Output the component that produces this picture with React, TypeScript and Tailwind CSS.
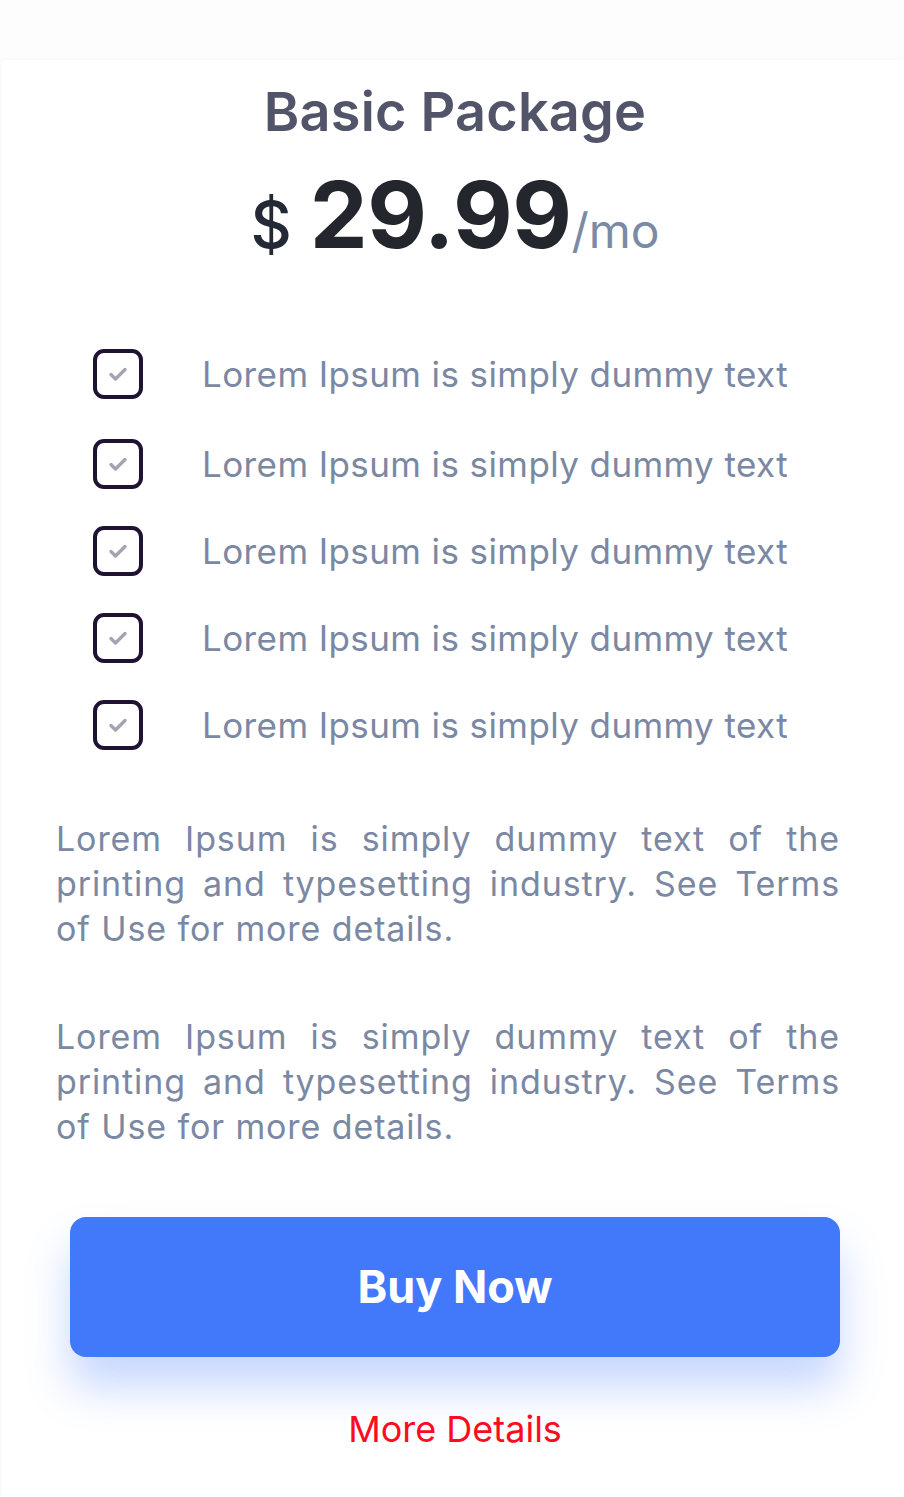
import React from 'react';

const FEATURES = [
  'Lorem Ipsum is simply dummy text',
  'Lorem Ipsum is simply dummy text',
  'Lorem Ipsum is simply dummy text',
  'Lorem Ipsum is simply dummy text',
  'Lorem Ipsum is simply dummy text',
];

const NOTE =
  'Lorem Ipsum is simply dummy text of the printing and typesetting industry. See Terms of Use for more details.';

function CheckBox() {
  return (
    <div className="w-[50px] h-[50px] shrink-0 rounded-[11px] border-[4px] border-[#1f1233] flex items-center justify-center">
      <svg width="24" height="24" viewBox="0 0 24 24" fill="none">
        <path d="M5 12.5l4.5 4.5L19 7.5" stroke="#a8a1b0" strokeWidth="3.4" strokeLinecap="round" strokeLinejoin="round" />
      </svg>
    </div>
  );
}

export default function App() {
  return (
    <div className="min-h-screen bg-[#fdfdfd] pt-[60px] font-['Inter','Noto_Sans',sans-serif]">
      {/* Card */}
      <div className="ml-[2px] bg-white shadow-[0_0_4px_rgba(120,130,170,0.06)] min-h-[1437px] pl-[54px] pr-[64px] pt-[20px]">
        <div className="pl-[14px]">
          <h1 className="text-center text-[54px] leading-[64px] font-semibold text-[#525469] tracking-[0.2px]">
            Basic Package
          </h1>

          <div className="flex items-baseline justify-center mt-[2px] h-[100px]">
            <span className="text-[64px] font-medium text-[#232a35] mr-[18px]">$</span>
            <span className="text-[92px] font-bold text-[#23262d] tracking-[-0.5px]">29.99</span>
            <span className="text-[48px] font-normal text-[#7b8aa6]">/mo</span>
          </div>
        </div>

        {/* Features */}
        <ul className="mt-[102px] pl-[37px] flex flex-col">
          {FEATURES.map((f, i) => (
            <li key={i} className={`flex items-center h-[52px] ${i === 0 ? '' : i === 1 ? 'mt-[38px]' : 'mt-[35px]'}`}>
              <CheckBox />
              <span className="ml-[59px] text-[35px] text-[#7b88a3] tracking-[0.4px]">{f}</span>
            </li>
          ))}
        </ul>

        {/* Notes */}
        <p className="mt-[65px] text-[34px] leading-[45px] text-[#7b88a3] text-justify tracking-[0.9px]">
          {NOTE}
        </p>
        <p className="mt-[63px] text-[34px] leading-[45px] text-[#7b88a3] text-justify tracking-[0.9px]">
          {NOTE}
        </p>

        {/* Actions */}
        <div className="mt-[68px] pl-[14px]">
          <button className="w-full h-[140px] rounded-[16px] bg-[#4279fb] text-white text-[45px] font-bold shadow-[0_30px_44px_rgba(66,121,251,0.30)]">
            Buy Now
          </button>
        </div>
        <div className="pl-[14px] text-center mt-[45px] text-[36px] text-[#ff0a1e]">More Details</div>
      </div>
    </div>
  );
}
